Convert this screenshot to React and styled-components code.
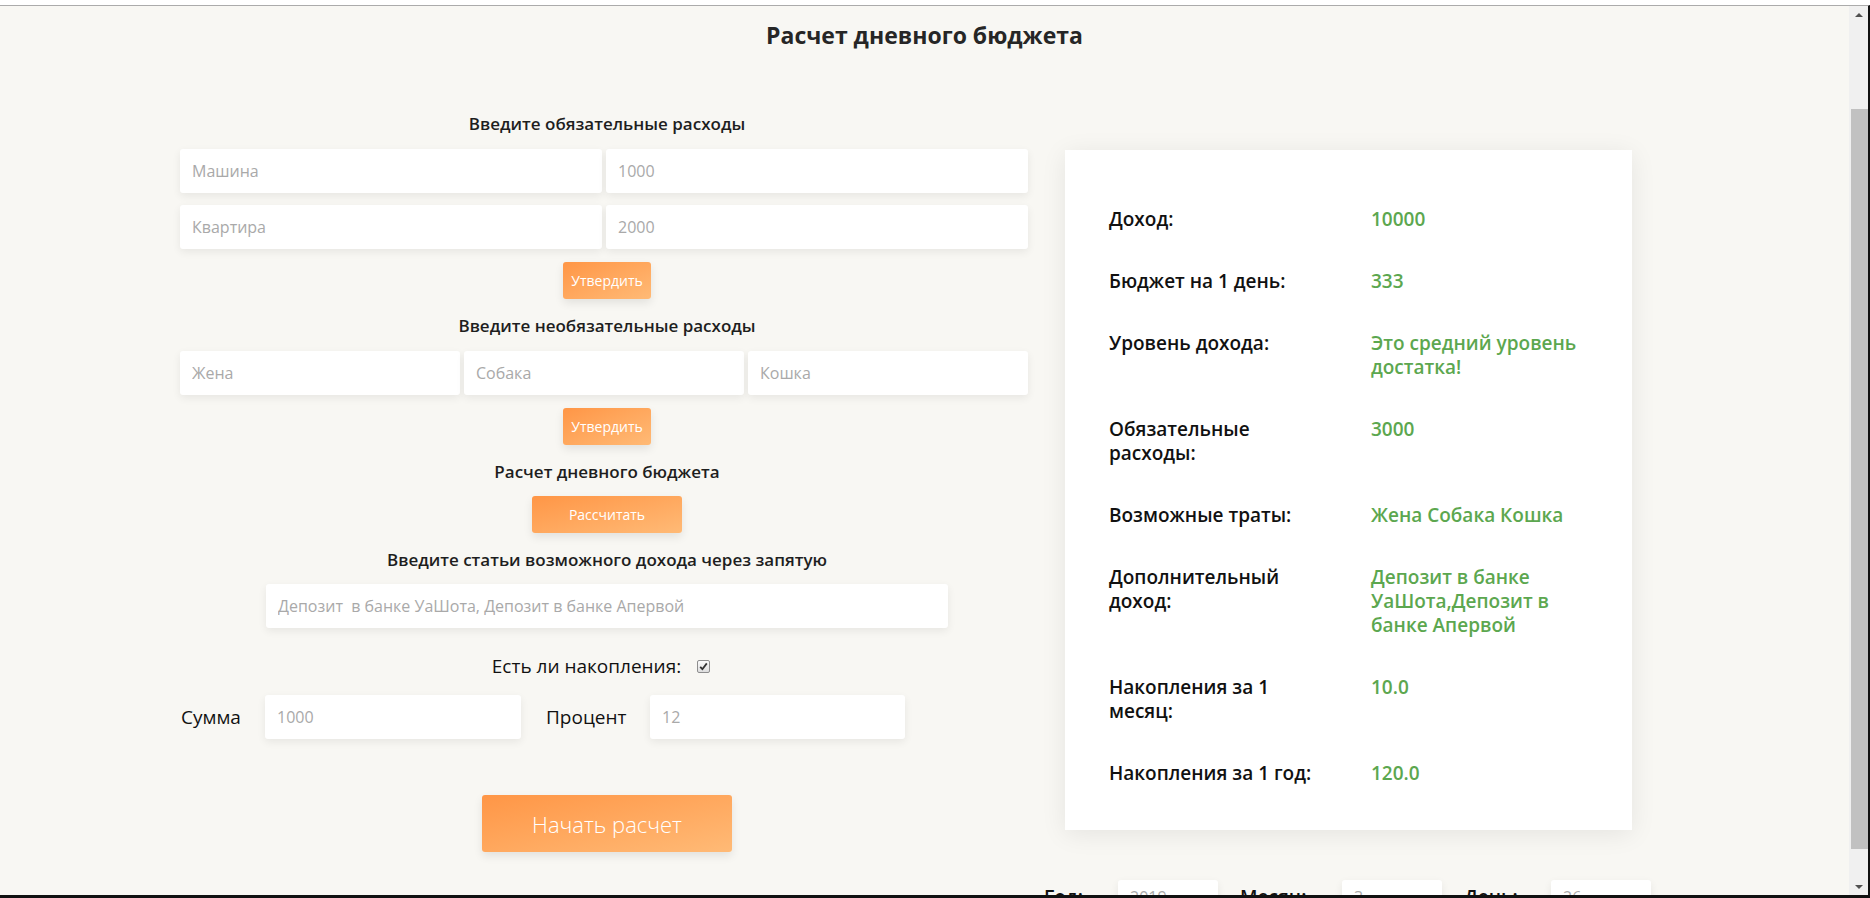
import React from "react";
import styled, { createGlobalStyle } from "styled-components";

const GlobalStyle = createGlobalStyle`
  html, body { margin: 0; padding: 0; background: #ffffff; }
  body { font-family: "Open Sans", "Noto Sans", sans-serif; }
  *, *::before, *::after { box-sizing: border-box; }
`;

const Frame = styled.div`
  width: 1870px;
  height: 898px;
  padding-top: 5px;
  background: #ffffff;
  display: flex;
  flex-direction: column;
  overflow: hidden;
`;

const Window = styled.div`
  flex: 1;
  min-height: 0;
  display: flex;
  border-top: 1px solid #ababab;
  border-bottom: 3px solid #111111;
  border-right: 2px solid #111111;
  overflow: hidden;
`;

const Page = styled.main`
  flex: 1;
  min-width: 0;
  background: #f8f7f3;
  overflow: hidden;
  display: flex;
  flex-direction: column;
`;

const Title = styled.h1`
  margin: 14px 0 0;
  font-size: 23px;
  line-height: 30px;
  font-weight: 700;
  text-align: center;
  color: #262626;
`;

const Columns = styled.div`
  display: flex;
  align-items: flex-start;
  gap: 10px;
  padding-left: 180px;
  margin-top: 63px;
`;

const LeftCol = styled.section`
  width: 854px;
  flex: 0 0 854px;
  display: flex;
  flex-direction: column;
  align-items: center;
`;

const SectionLabel = styled.h2`
  margin: 16px 0 0;
  font-size: 17px;
  line-height: 22px;
  font-weight: 600;
  color: #1e1e1e;
  &:first-child { margin-top: 0; }
`;

const InputGrid = styled.div`
  align-self: flex-start;
  width: 848px;
  margin-top: 14px;
  display: grid;
  grid-template-columns: repeat(${(p) => p.$cols}, 1fr);
  column-gap: 4px;
  row-gap: 12px;
`;

const Field = styled.input`
  width: ${(p) => (p.$w ? `${p.$w}px` : "100%")};
  height: ${(p) => p.$h || 44}px;
  flex: 0 0 auto;
  border: none;
  border-radius: 3px;
  background: #ffffff;
  box-shadow: 0 3px 8px rgba(0, 0, 0, 0.07);
  padding: 0 12px;
  font-family: "Open Sans", "Noto Sans", sans-serif;
  font-size: 16px;
  color: #333333;
  outline: none;
  &::placeholder { color: #a9a9a9; }
`;

const WideField = styled(Field)`
  margin-top: 13px;
`;

const sizes = {
  sm: { w: 88, h: 37, f: 14, mt: 13 },
  md: { w: 150, h: 37, f: 14, mt: 13 },
  lg: { w: 250, h: 57, f: 22, mt: 56 },
};

const OrangeButton = styled.button`
  margin-top: ${(p) => sizes[p.$size].mt}px;
  width: ${(p) => sizes[p.$size].w}px;
  height: ${(p) => sizes[p.$size].h}px;
  border: none;
  border-radius: 3px;
  background: linear-gradient(to right bottom, #ff9646, #ffba76);
  box-shadow: 0 4px 10px rgba(0, 0, 0, 0.09);
  color: #ffffff;
  font-family: "Open Sans", "Noto Sans", sans-serif;
  font-size: ${(p) => sizes[p.$size].f}px;
  font-weight: ${(p) => (p.$size === "lg" ? 300 : 400)};
  padding: 0;
  cursor: pointer;
`;

const CheckRow = styled.label`
  margin-top: 27px;
  margin-right: 12px;
  display: flex;
  align-items: center;
  gap: 16px;
  font-size: 19px;
  line-height: 22px;
  color: #111111;
`;

const CheckBox = styled.span`
  width: 13px;
  height: 13px;
  border: 1px solid #8e8e8e;
  border-radius: 2px;
  background: linear-gradient(#fbfbfb, #dedede);
  display: flex;
  align-items: center;
  justify-content: center;
`;

const SumRow = styled.div`
  align-self: stretch;
  margin-top: 18px;
  display: flex;
  align-items: center;
`;

const SumLabel = styled.span`
  flex: 0 0 ${(p) => p.$w}px;
  padding-left: ${(p) => p.$indent}px;
  font-size: 19px;
  color: #111111;
`;

const RightCol = styled.section`
  width: 609px;
  flex: 0 0 609px;
  display: flex;
  flex-direction: column;
`;

const Panel = styled.dl`
  margin: 37px 21px 0;
  background: #ffffff;
  box-shadow: 0 4px 24px rgba(0, 0, 0, 0.08);
  padding: 57px 44px 45px;
  display: grid;
  grid-template-columns: 220px 215px;
  column-gap: 42px;
  row-gap: 38px;
`;

const Term = styled.dt`
  margin: 0;
  font-size: 19px;
  line-height: 24px;
  font-weight: 600;
  color: #111111;
`;

const Value = styled.dd`
  margin: 0;
  font-size: 19px;
  line-height: 24px;
  font-weight: 600;
  color: #5ca74f;
`;

const DateRow = styled.div`
  margin-top: 50px;
  display: flex;
  align-items: center;
  gap: 22px;
`;

const DateGroup = styled.div`
  display: flex;
  align-items: center;
`;

const DateLabel = styled.span`
  flex: 0 0 ${(p) => p.$w}px;
  font-size: 19px;
  line-height: 24px;
  font-weight: 600;
  color: #111111;
`;

const Scrollbar = styled.div`
  flex: 0 0 19px;
  width: 19px;
  background: #f0f0f0;
  display: flex;
  flex-direction: column;
  align-items: center;
`;

const ArrowBtn = styled.div`
  flex: 0 0 17px;
  display: flex;
  align-items: center;
  justify-content: center;
  width: 100%;
`;

const Triangle = styled.span`
  width: 0;
  height: 0;
  border-left: 4px solid transparent;
  border-right: 4px solid transparent;
  ${(p) => (p.$down ? "border-top: 4px solid #505050;" : "border-bottom: 4px solid #505050;")}
`;

const Track = styled.div`
  flex: 1;
  width: 100%;
  display: flex;
  flex-direction: column;
  align-items: flex-end;
`;

const Thumb = styled.div`
  margin-top: 86px;
  width: 17px;
  height: 740px;
  background: #c1c1c1;
`;

const results = [
  ["Доход:", "10000"],
  ["Бюджет на 1 день:", "333"],
  ["Уровень дохода:", "Это средний уровень достатка!"],
  ["Обязательные расходы:", "3000"],
  ["Возможные траты:", "Жена Собака Кошка"],
  ["Дополнительный доход:", "Депозит в банке УаШота,Депозит в банке Апервой"],
  ["Накопления за 1 месяц:", "10.0"],
  ["Накопления за 1 год:", "120.0"],
];

export default function App() {
  return (
    <>
      <GlobalStyle />
      <Frame>
        <Window>
          <Page>
            <Title>Расчет дневного бюджета</Title>
            <Columns>
              <LeftCol>
                <SectionLabel>Введите обязательные расходы</SectionLabel>
                <InputGrid $cols={2}>
                  <Field placeholder="Машина" />
                  <Field placeholder="1000" />
                  <Field placeholder="Квартира" />
                  <Field placeholder="2000" />
                </InputGrid>
                <OrangeButton $size="sm">Утвердить</OrangeButton>

                <SectionLabel>Введите необязательные расходы</SectionLabel>
                <InputGrid $cols={3}>
                  <Field placeholder="Жена" />
                  <Field placeholder="Собака" />
                  <Field placeholder="Кошка" />
                </InputGrid>
                <OrangeButton $size="sm">Утвердить</OrangeButton>

                <SectionLabel>Расчет дневного бюджета</SectionLabel>
                <OrangeButton $size="md">Рассчитать</OrangeButton>

                <SectionLabel>Введите статьи возможного дохода через запятую</SectionLabel>
                <WideField $w={682} placeholder="Депозит  в банке УаШота, Депозит в банке Апервой" />

                <CheckRow>
                  Есть ли накопления:
                  <CheckBox>
                    <svg width="9" height="9" viewBox="0 0 9 9">
                      <path d="M1.2 4.8 L3.4 7.2 L7.8 1.4" fill="none" stroke="#333" strokeWidth="1.8" />
                    </svg>
                  </CheckBox>
                </CheckRow>

                <SumRow>
                  <SumLabel $w={85} $indent={1}>Сумма</SumLabel>
                  <Field $w={256} placeholder="1000" />
                  <SumLabel $w={129} $indent={25}>Процент</SumLabel>
                  <Field $w={255} placeholder="12" />
                </SumRow>

                <OrangeButton $size="lg">Начать расчет</OrangeButton>
              </LeftCol>

              <RightCol>
                <Panel>
                  {results.map(([k, v]) => (
                    <React.Fragment key={k}>
                      <Term>{k}</Term>
                      <Value>{v}</Value>
                    </React.Fragment>
                  ))}
                </Panel>
                <DateRow>
                  <DateGroup>
                    <DateLabel $w={74}>Год:</DateLabel>
                    <Field $w={100} $h={34} placeholder="2019" />
                  </DateGroup>
                  <DateGroup>
                    <DateLabel $w={102}>Месяц:</DateLabel>
                    <Field $w={100} $h={34} placeholder="3" />
                  </DateGroup>
                  <DateGroup>
                    <DateLabel $w={87}>День:</DateLabel>
                    <Field $w={100} $h={34} placeholder="26" />
                  </DateGroup>
                </DateRow>
              </RightCol>
            </Columns>
          </Page>
          <Scrollbar>
            <ArrowBtn><Triangle /></ArrowBtn>
            <Track><Thumb /></Track>
            <ArrowBtn><Triangle $down /></ArrowBtn>
          </Scrollbar>
        </Window>
      </Frame>
    </>
  );
}
